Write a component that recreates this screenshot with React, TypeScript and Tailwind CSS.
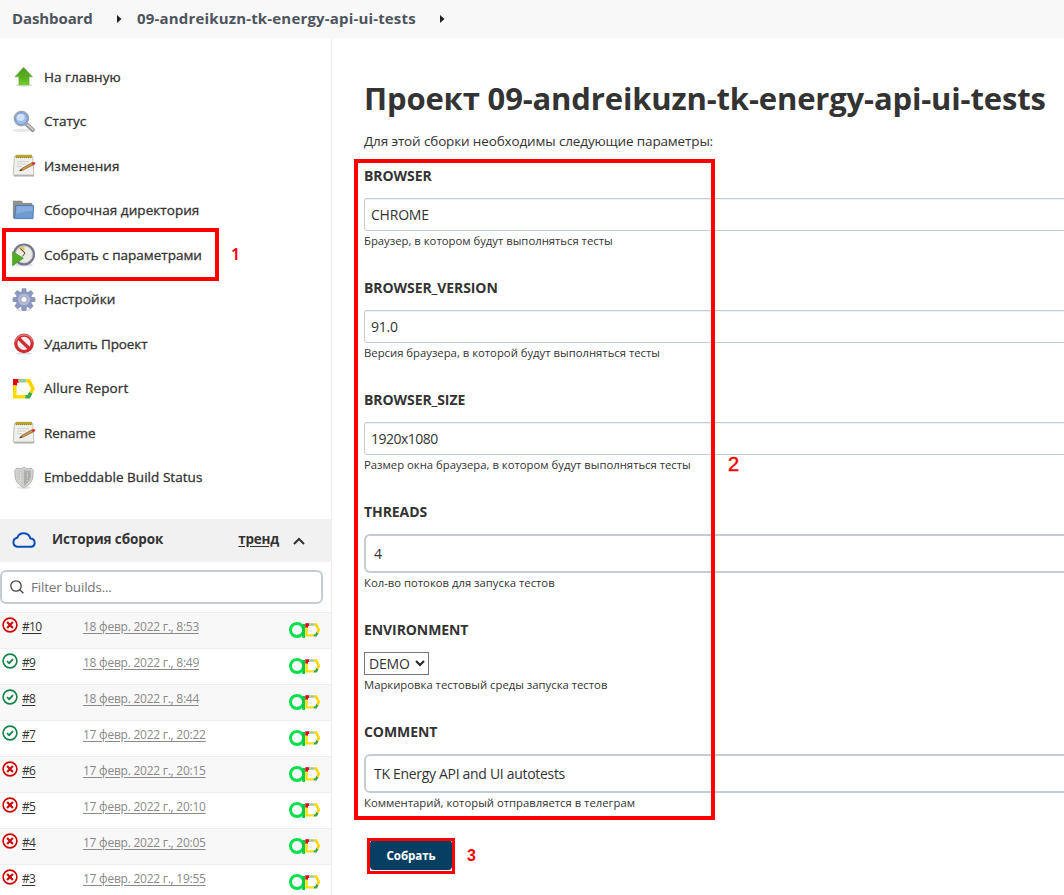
import React from "react";

type Nav = { label: string; t: string; icon: () => React.ReactElement };

const HomeIcon = () => (
  <svg width="24" height="24" viewBox="0 0 24 24">
    <defs>
      <linearGradient id="hg" x1="0" y1="0" x2="0" y2="1"><stop offset="0" stopColor="#4f9a1c" /><stop offset=".6" stopColor="#57b022" /><stop offset="1" stopColor="#6ed61f" /></linearGradient>
    </defs>
    <ellipse cx="12" cy="20.3" rx="8.5" ry="1.5" fill="#ddd" />
    <path d="M11.6 2.3 L20.4 11.8 H17 V19.8 H7 V11.8 H3 Z" fill="url(#hg)" stroke="#6bab47" strokeWidth=".7" />
  </svg>
);

const SearchIcon = () => (
  <svg width="24" height="24" viewBox="0 0 24 24">
    <ellipse cx="10" cy="20.2" rx="9" ry="1.8" fill="#e8e8e8" />
    <path d="M14.6 14.2 L20.8 20" stroke="#8f9090" strokeWidth="4" strokeLinecap="round" />
    <path d="M15.4 14.6 L20.8 19.6" stroke="#cfcfcf" strokeWidth="1.6" strokeLinecap="round" />
    <circle cx="9.4" cy="8.6" r="7.2" fill="#b4cdec" stroke="#a0a3a8" strokeWidth="1.2" />
    <circle cx="9.4" cy="8.6" r="6" fill="#9dbdec" stroke="#6f93c6" strokeWidth="1" />
    <ellipse cx="8.6" cy="7.4" rx="4" ry="3.4" fill="#cfe0f6" />
  </svg>
);

const NotepadIcon = () => (
  <svg width="24" height="24" viewBox="0 0 24 24">
    <path d="M2 21.8 H22" stroke="#a9a9a3" strokeWidth="1.4" />
    <path d="M2.4 2.6 H20.8 L22 21 H1.2 Z" fill="#efefed" stroke="#b5b5ae" strokeWidth=".8" />
    <rect x="3.5" y=".8" width="16.5" height="3" fill="#b7a431" />
    <path d="M4 3.6 H20" stroke="#8c7e2b" strokeWidth=".9" strokeDasharray="1 1" />
    <path d="M5 7.5 H17 M5 10 H14 M5 12.5 H10" stroke="#cfcfcd" strokeWidth=".9" />
    <path d="M7.6 17 L9.6 14.6 L20.4 8.6 L21.4 10.8 L10.8 16.2 Z" fill="#d99a48" stroke="#7d5a2c" strokeWidth=".7" />
    <path d="M7.6 17 L9.2 15 L10.2 16.6 Z" fill="#333" />
    <path d="M19.6 9 L21.4 8 L23.4 8.6 L23 10.2 L20.8 11.2 Z" fill="#d93526" />
  </svg>
);

const FolderIcon = () => (
  <svg width="24" height="24" viewBox="0 0 24 24">
    <path d="M1.4 2.2 H9.6 L10.8 4.4 H19.8 V19 H1.4 Z" fill="#929390" stroke="#7b7c7a" strokeWidth=".8" />
    <path d="M3.8 6.4 H21.6 L21 19.6 H2.6 Z" fill="#6f9bd1" stroke="#4a75b2" strokeWidth=".9" />
    <path d="M4.6 7.2 H20.8 L20.6 12 Q12 11.6 4.2 15 Z" fill="#86addc" />
  </svg>
);

const ClockIcon = () => (
  <svg width="24" height="24" viewBox="0 0 24 24">
    <ellipse cx="12" cy="22" rx="9" ry="1.4" fill="#ddd" />
    <circle cx="12" cy="11.4" r="9.9" fill="#ecebe2" stroke="#74758c" strokeWidth="2.2" />
    <circle cx="12" cy="11.4" r="8.4" fill="none" stroke="#c4c5d2" strokeWidth=".7" />
    <path d="M12.4 10.6 L6.5 5 Q9 2.9 12.6 3.2 Z" fill="#dcc46a" />
    <path d="M8.4 5.6 L13 10 L10.6 13.4" fill="none" stroke="#4c4a40" strokeWidth="1" />
    <path d="M.6 8.6 L11.4 15.2 L.6 22.8 Z" fill="#4fae1e" stroke="#45932a" strokeWidth=".7" />
  </svg>
);

const GearIcon = () => (
  <svg width="24" height="24" viewBox="0 0 24 24">
    <defs>
      <linearGradient id="gg" x1="0" y1="0" x2="0" y2="24" gradientUnits="userSpaceOnUse"><stop offset="0" stopColor="#6f84b0" /><stop offset=".5" stopColor="#9aa3c4" /><stop offset="1" stopColor="#a9acc6" /></linearGradient>
    </defs>
    <ellipse cx="12" cy="22" rx="8" ry="1.3" fill="#e4e4e4" />
    <circle cx="12" cy="11.6" r="8.2" fill="url(#gg)" />
    {[0, 45, 90, 135, 180, 225, 270, 315].map((a) => (
      <path key={a} d="M9.8 .2 H14.2 L15 6 H9 Z" transform={`rotate(${a} 12 11.6)`} fill="#8b97bd" />
    ))}
    <circle cx="12" cy="11.6" r="6" fill="#b3b9d3" />
    <circle cx="12" cy="11.6" r="3" fill="#fff" stroke="#8b95b8" strokeWidth=".7" />
  </svg>
);

const NoIcon = () => (
  <svg width="24" height="24" viewBox="0 0 24 24">
    <ellipse cx="12" cy="21.4" rx="8" ry="1.2" fill="#ddd" />
    <circle cx="12" cy="11.4" r="8.2" fill="#f4f0f0" stroke="#cf2a30" strokeWidth="3.2" />
    <path d="M6.4 6 L17.6 17" stroke="#cf2a30" strokeWidth="3.2" />
    <path d="M3.6 9.5 A8.6 8.6 0 0 1 20.4 9.5" fill="none" stroke="#e5777a" strokeWidth="1.4" />
  </svg>
);

const AllureShape = () => (
  <>
    <path d="M1 2 H6.6 V6 H5 V8.6 H1 Z" fill="#e3000f" />
    <path d="M6.6 2 H14.6 L14.2 5.4 H6.6 Z" fill="#9ccc9c" />
    <path d="M14.6 2 H18 L23 11.6 L20.4 16.8 L17.2 14.8 L19 11.6 L15.6 5.4 H14.2 Z" fill="#ffd500" />
    <path d="M20.4 16.8 L17.8 21.4 H13 L13.4 18 H15.6 L17.2 14.8 Z" fill="#3aa64c" />
    <path d="M1 8.6 H4.6 V18 H13.4 L13 21.4 H1 Z" fill="#fddc00" />
  </>
);

const AllureIcon = () => (
  <svg width="24" height="24" viewBox="0 0 24 24"><AllureShape /></svg>
);

const ShieldIcon = () => (
  <svg width="24" height="24" viewBox="0 0 24 24">
    <ellipse cx="12" cy="21.5" rx="7" ry="1.4" fill="#e2e2e2" />
    <path d="M12 1 Q14 3.4 17 2.6 L19 2 L21.4 4.6 Q20.6 7 21 10 Q20.6 17.5 12 21.6 Q3.4 17.5 3 10 Q3.4 7 2.6 4.6 L5 2 L7 2.6 Q10 3.4 12 1 Z" fill="#d4d5d3" stroke="#a5a6a4" strokeWidth=".8" />
    <path d="M12 3.4 Q15 5.4 19 4.2 Q18.4 7 19 10 Q18.4 16 12 19.4 Z" fill="#adaeac" />
    <path d="M12 3.4 Q9 5.4 5 4.2 Q5.6 7 5 10 Q5.6 16 12 19.4 Z" fill="#cbccca" />
    <path d="M8.6 6.5 V15 M15.4 6.5 V15" stroke="#f1f1f1" strokeWidth=".8" strokeDasharray="1 1.5" />
  </svg>
);

const navItems: Nav[] = [
  { label: "На главную", t: "tracking-[0.05px]", icon: HomeIcon },
  { label: "Статус", t: "tracking-[0.05px]", icon: SearchIcon },
  { label: "Изменения", t: "tracking-[0.05px]", icon: NotepadIcon },
  { label: "Сборочная директория", t: "tracking-[0.06px]", icon: FolderIcon },
  { label: "Собрать с параметрами", t: "", icon: ClockIcon },
  { label: "Настройки", t: "tracking-[0.06px]", icon: GearIcon },
  { label: "Удалить Проект", t: "tracking-[-0.1px]", icon: NoIcon },
  { label: "Allure Report", t: "tracking-[0.12px]", icon: AllureIcon },
  { label: "Rename", t: "tracking-[-0.05px]", icon: NotepadIcon },
  { label: "Embeddable Build Status", t: "tracking-[0.04px]", icon: ShieldIcon },
];

const builds = [
  { id: "#10", date: "18 февр. 2022 г., 8:53", ok: false },
  { id: "#9", date: "18 февр. 2022 г., 8:49", ok: true },
  { id: "#8", date: "18 февр. 2022 г., 8:44", ok: true },
  { id: "#7", date: "17 февр. 2022 г., 20:22", ok: true },
  { id: "#6", date: "17 февр. 2022 г., 20:15", ok: false },
  { id: "#5", date: "17 февр. 2022 г., 20:10", ok: false },
  { id: "#4", date: "17 февр. 2022 г., 20:05", ok: false },
  { id: "#3", date: "17 февр. 2022 г., 19:55", ok: false },
];

const StatusIcon = ({ ok }: { ok: boolean }) => (
  <svg width="16" height="16" viewBox="0 0 16 16" fill="none" stroke={ok ? "#138347" : "#cc0003"}>
    <circle cx="8" cy="8" r="6.9" strokeWidth="1.6" />
    {ok ? <path d="M5 8.2 L7.2 10.2 L11 6.2" strokeWidth="1.8" /> : <path d="M5.1 5.1 L10.9 10.9 M10.9 5.1 L5.1 10.9" strokeWidth="2.1" />}
  </svg>
);

const AllureBadge = () => (
  <svg width="32" height="18" viewBox="0 0 32 18">
    <circle cx="8" cy="9" r="6.5" fill="none" stroke="#06df4e" strokeWidth="3" />
    <path d="M14.6 3 V17" stroke="#06c948" strokeWidth="2.8" />
    <g transform="translate(15.6 1) scale(.68)"><AllureShape /></g>
  </svg>
);

const fields = [
  { name: "BROWSER", value: "CHROME", t: "tracking-[-0.2px]", help: "Браузер, в котором будут выполняться тесты", kind: "small" },
  { name: "BROWSER_VERSION", value: "91.0", t: "tracking-[-0.25px]", help: "Версия браузера, в которой будут выполняться тесты", kind: "small" },
  { name: "BROWSER_SIZE", value: "1920x1080", t: "tracking-[-0.5px]", help: "Размер окна браузера, в котором будут выполняться тесты", kind: "small" },
  { name: "THREADS", value: "4", t: "", help: "Кол-во потоков для запуска тестов", kind: "large" },
  { name: "ENVIRONMENT", value: "DEMO", t: "tracking-[-0.2px]", help: "Маркировка тестовый среды запуска тестов", kind: "select" },
  { name: "COMMENT", value: "TK Energy API and UI autotests", t: "tracking-[-0.31px]", help: "Комментарий, который отправляется в телеграм", kind: "large" },
];

const boxes: Record<string, string> = {
  small: "h-[33px] w-[720px] rounded-[3px] border border-[#c3ccd1] pl-1.5 shadow-[inset_0_1px_1px_rgba(0,0,0,0.06)]",
  large: "h-[39px] w-[720px] rounded-md border-2 border-[#c3cdd1] pl-2",
  select: "h-[23px] w-[65px] border border-[#767676] pl-1",
};

const Caret = () => (
  <svg width="5" height="8" viewBox="0 0 5 8"><path d="M0 0 L4.5 4 L0 8 Z" fill="#222" /></svg>
);

export default function App() {
  return (
    <div className="relative h-[895px] w-[1064px] overflow-hidden bg-white font-['Open_Sans','Noto_Sans',sans-serif] text-sm text-[#333]">
      <header className="flex h-[38px] items-center bg-[#f8f8f8] pb-px pl-3 text-[15px] font-bold whitespace-nowrap text-[#4d545d]">
        <span className="w-[80px] tracking-[-0.1px]">Dashboard</span>
        <span className="mr-[15px] ml-[25px]"><Caret /></span>
        <span className="w-[280px] tracking-[0.17px]">09-andreikuzn-tk-energy-api-ui-tests</span>
        <span className="ml-[23px]"><Caret /></span>
      </header>
      <div className="flex h-[857px]">
        <aside className="w-[332px] shrink-0 border-r border-[#eee] pt-[17px]">
          <nav>
            {navItems.map((n) => (
              <div key={n.label} className="flex h-[44.5px] items-center gap-2 pl-3 text-[13.5px] [-webkit-text-stroke:0.3px_#333]">
                <n.icon /><span className={`whitespace-nowrap ${n.t}`}>{n.label}</span>
              </div>
            ))}
          </nav>
          <div className="mt-[19px] flex h-[43px] items-center bg-[#f1f1f1] pb-0.5 pl-[11px] text-[13.5px] font-bold">
            <svg width="26" height="18" viewBox="0 0 26 18" fill="none" stroke="#0b4fb8" strokeWidth="2" strokeLinejoin="round"><path d="M6 15.8 A4.6 4.6 0 0 1 6.2 6.8 A6.9 6.9 0 0 1 19.4 7.6 A4.15 4.15 0 0 1 20.4 15.8 Z" /></svg>
            <span className="ml-[15px] tracking-[-0.1px]">История сборок</span>
            <span className="ml-auto tracking-[-0.25px] underline underline-offset-2">тренд</span>
            <svg className="mt-[3px] mr-[26px] ml-3.5" width="12" height="8" viewBox="0 0 12 8" fill="none" stroke="#333" strokeWidth="2"><path d="M1 7 L6 2 L11 7" /></svg>
          </div>
          <div className="mt-2 flex h-[34px] w-[323px] items-center rounded-md border-2 border-[#c3cdd1] pl-2 text-[13.5px] text-[#757575]">
            <svg width="14" height="14" viewBox="0 0 14 14" fill="none" stroke="#444" strokeWidth="1.3"><circle cx="6" cy="6" r="5.2" /><path d="M9.8 9.8 L13.4 13.2" /></svg>
            <span className="mt-px ml-[7px] tracking-[-0.2px]">Filter builds...</span>
          </div>
          <div className="mt-2">
            {builds.map((b) => (
              <div key={b.id} className="flex h-9 items-start border-t border-[#eee] pl-0.5 text-xs odd:bg-[#f8f8f8]">
                <span className="mt-1"><StatusIcon ok={b.ok} /></span>
                <span className="mt-1.5 ml-1 w-[61px] tracking-[-0.7px] underline underline-offset-2">{b.id}</span>
                <span className="mt-1.5 tracking-[-0.25px] text-[#8a8a8a] underline underline-offset-2">{b.date}</span>
                <span className="mt-2 mr-2.5 ml-auto"><AllureBadge /></span>
              </div>
            ))}
          </div>
        </aside>
        <main className="min-w-0 flex-1 overflow-hidden pl-8">
          <h1 className="mt-9 text-[31px] leading-[48px] font-bold tracking-[-0.15px] whitespace-nowrap">Проект 09-andreikuzn-tk-energy-api-ui-tests</h1>
          <p className="mt-[9px] mb-[15px] h-5 text-[13.5px] leading-5 tracking-[-0.14px]">Для этой сборки необходимы следующие параметры:</p>
          {fields.map((f) => (
            <div key={f.name} className="mb-[27px]">
              <div className="mb-3 h-5 leading-5 font-bold tracking-[-0.08px]">{f.name}</div>
              <div className={`flex items-center ${boxes[f.kind]}`}>
                <span className={f.t}>{f.value}</span>
                {f.kind === "select" && <svg className="ml-[5px]" width="10" height="7" viewBox="0 0 10 7" fill="none" stroke="#222" strokeWidth="2"><path d="M1 1 L5 5 L9 1" /></svg>}
              </div>
              <div className="h-5 text-[11.3px] leading-5">{f.help}</div>
            </div>
          ))}
          <button className="mt-px ml-1.5 block h-[30px] w-[82px] rounded-sm bg-[#073f63] pt-0.5 text-[11.6px] font-bold tracking-[-0.1px] text-white">Собрать</button>
        </main>
      </div>
      <div className="absolute top-[228px] left-[2px] h-[53px] w-[217px] border-4 border-[#fe0000]" />
      <div className="absolute top-[159px] left-[354px] h-[661px] w-[361px] border-4 border-[#fe0000]" />
      <div className="absolute top-[838px] left-[367px] h-9 w-[88px] border-[3px] border-[#fe0000]" />
      <span className="absolute top-[244px] left-[231px] font-['Noto_Sans',sans-serif] text-base leading-5 font-semibold text-[#fe0000]">1</span>
      <span className="absolute top-[454px] left-[728px] font-['Liberation_Sans',sans-serif] text-xl leading-5 text-[#fe0000] [-webkit-text-stroke:0.5px_#fe0000]">2</span>
      <span className="absolute top-[846px] left-[467px] font-['Liberation_Sans',sans-serif] text-base leading-5 font-bold text-[#fe0000]">3</span>
    </div>
  );
}
